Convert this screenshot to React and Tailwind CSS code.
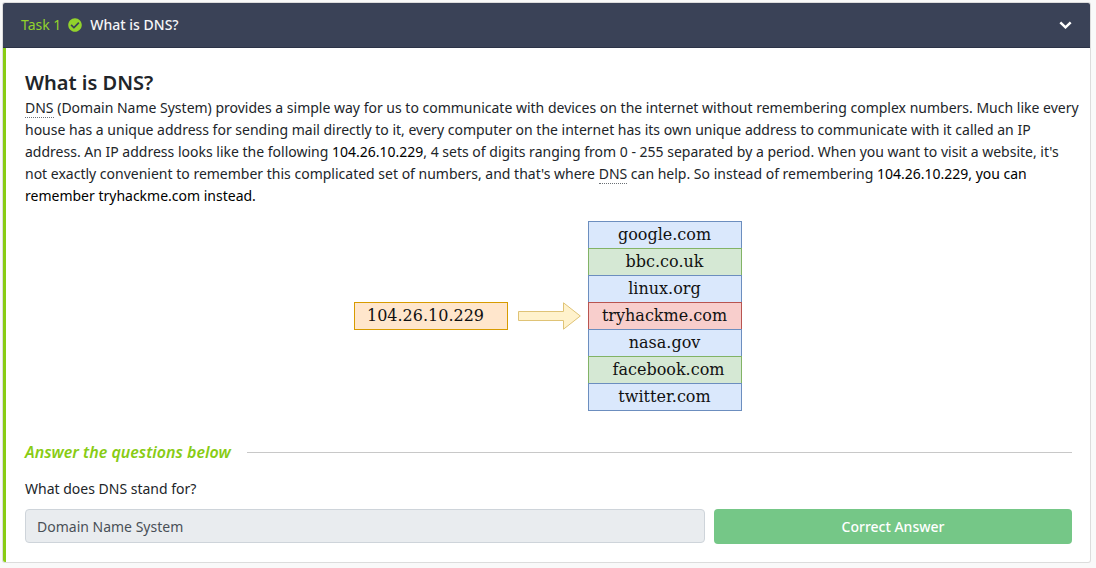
import { FaCheckCircle } from "react-icons/fa";

const BLUE = "border-[#6c8ebf] bg-[#dae8fc]";
const GREEN = "border-[#82b366] bg-[#d5e8d4]";

const sites = [
  { name: "google.com", tone: BLUE },
  { name: "bbc.co.uk", tone: GREEN },
  { name: "linux.org", tone: BLUE },
  { name: "tryhackme.com", tone: "border-[#b85450] bg-[#f8cecc]" },
  { name: "nasa.gov", tone: BLUE },
  { name: "facebook.com", tone: GREEN + " pl-2" },
  { name: "twitter.com", tone: BLUE },
];

function TaskHeader() {
  return (
    <header className="border-b border-[#2c3347] bg-[#3a4257]">
      <button type="button" className="flex h-11 w-full items-center pr-4 pl-[18px] text-left text-sm">
        <span className="text-[#92d22c]">Task 1</span>
        <FaCheckCircle className="mr-2 ml-[7px] size-3.5 text-[#92d22c]" aria-hidden="true" />
        <span className="font-medium text-[#f5f6f8]">What is DNS?</span>
        <svg className="mr-0.5 ml-auto h-2 w-[13px]" viewBox="0 0 13 8" fill="none" aria-hidden="true">
          <path d="M1.3 1.3 6.5 6.3 11.7 1.3" stroke="#fff" strokeWidth="2.5" />
        </svg>
      </button>
    </header>
  );
}

function Dns() {
  return (
    <abbr title="Domain Name System" className="border-b border-dotted border-[#6b7075] no-underline">
      DNS
    </abbr>
  );
}

function Diagram() {
  return (
    <div className="flex items-center justify-center pr-0.5 font-['DejaVu_Serif',serif] text-base text-[#111]">
      <div className="flex h-7 w-[154px] items-center justify-center border border-[#d79b00] bg-[#ffe6cc] pr-2.5">
        104.26.10.229
      </div>
      <svg className="mr-[7px] ml-2.5 h-7 w-[63px]" viewBox="0 0 63 28" aria-hidden="true">
        <path d="M.5 9.5H45.5V.8L62.3 14 45.5 27.2V18.5H.5Z" fill="#fff2cc" stroke="#dfc376" />
      </svg>
      <ul className="w-[154px] pt-px">
        {sites.map((s) => (
          <li key={s.name} className={"-mt-px flex h-7 items-center justify-center border " + s.tone}>
            {s.name}
          </li>
        ))}
      </ul>
    </div>
  );
}

export default function App() {
  return (
    <main className="min-h-screen bg-[#f9f9f9] pt-[3px] pr-1.5 pb-1 pl-[3px] font-['Noto_Sans',sans-serif] text-sm text-[#212529]">
      <section className="overflow-hidden rounded-xs bg-white shadow-[0_0_0_1px_#dcdcdc]">
        <TaskHeader />
        <div className="border-l-3 border-[#88cc14] pt-[21px] pr-[18px] pb-[18px] pl-[19px]">
          <h1 className="text-xl leading-7 font-semibold">What is DNS?</h1>
          <p className="-mr-2.5 leading-[22px]">
            <Dns /> (Domain Name System) provides a simple way for us to communicate with devices on the
            internet without remembering complex numbers. Much like every house has a unique address for
            sending mail directly to it, every computer on the internet has its own unique address to
            communicate with it called an IP address. An IP address looks like the following{" "}
            <span className="text-black">104.26.10.229</span>, 4 sets of digits ranging from 0 - 255
            separated by a period. When you want to visit a website, it's not exactly convenient to
            remember this complicated set of numbers, and that's where <Dns /> can help. So instead of
            remembering <span className="text-black">104.26.10.229, you can remember tryhackme.com instead.</span>
          </p>
          <div className="mt-3.5">
            <Diagram />
          </div>
          <div className="mt-[27px] flex items-center gap-4">
            <h2 className="text-base leading-7 font-semibold text-[#88cc14] italic">Answer the questions below</h2>
            <hr className="flex-1 border-[#c8c8c8]" />
          </div>
          <form className="mt-3" onSubmit={(e) => e.preventDefault()}>
            <label htmlFor="answer" className="block leading-[22px]">
              What does DNS stand for?
            </label>
            <div className="mt-[9px] grid grid-cols-[680fr_358fr] items-start gap-[9px]">
              <input
                id="answer"
                type="text"
                defaultValue="Domain Name System"
                disabled
                className="h-[34px] min-w-0 rounded-sm border border-[#ced4da] bg-[#e9ecef] px-[11px] text-[#495057]"
              />
              <button type="button" className="h-[35px] min-w-0 rounded-sm bg-[#75c787] font-medium text-white">
                Correct Answer
              </button>
            </div>
          </form>
        </div>
      </section>
    </main>
  );
}
